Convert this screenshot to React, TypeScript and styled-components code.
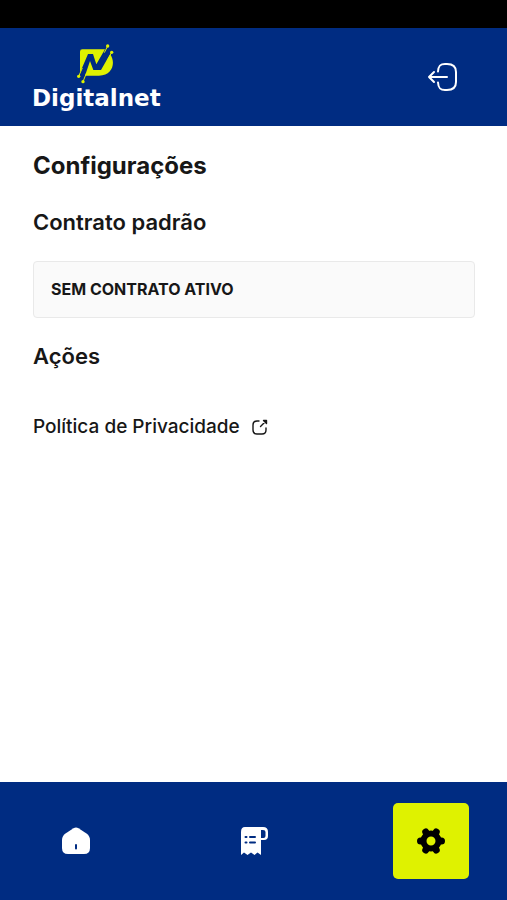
import React from "react";
import styled, { createGlobalStyle } from "styled-components";

const color = {
  brand: "#002c82",
  accent: "#dff200",
  text: "#171717",
  panel: "#fafafa",
  line: "#e9e9e9",
};

const GlobalStyle = createGlobalStyle`
  *, *::before, *::after { box-sizing: border-box; }
  body {
    margin: 0;
    background: #fff;
    color: ${color.text};
    font-family: Inter, "Liberation Sans", sans-serif;
  }
`;

const Screen = styled.div`
  display: flex;
  flex-direction: column;
  min-height: 100vh;
`;

const StatusBar = styled.div`
  height: 28px;
  background: #000;
`;

const Header = styled.header`
  display: flex;
  align-items: center;
  justify-content: space-between;
  padding: 14px 44px 14px 32px;
  background: ${color.brand};
`;

const Brand = styled.a`
  display: flex;
  flex-direction: column;
  align-items: center;
  padding-top: 2px;
  height: 70px;
  color: #fff;
  text-decoration: none;
`;

const Wordmark = styled.span`
  font-family: "DejaVu Sans", sans-serif;
  font-size: 23px;
  font-weight: 700;
  line-height: 28px;
`;

const IconButton = styled.button`
  display: flex;
  padding: 4px;
  border: 0;
  background: none;
  color: #fff;
  cursor: pointer;
`;

const Main = styled.main`
  display: flex;
  flex: 1;
  flex-direction: column;
  padding: 24px 32px 24px 33px;
`;

const PageTitle = styled.h1`
  margin: 0 0 24px;
  font-size: 24px;
  font-weight: 700;
  line-height: 32px;
`;

const SectionTitle = styled.h2`
  margin: 0 0 23px;
  font-size: 22px;
  font-weight: 600;
  line-height: 32px;
`;

const ContractCard = styled.div`
  margin-bottom: 22px;
  padding: 16px 17px;
  border: 1px solid ${color.line};
  border-radius: 4px;
  background: ${color.panel};
  font-size: 16px;
  font-weight: 700;
  line-height: 23px;
`;

const ActionLink = styled.a`
  display: flex;
  align-items: center;
  align-self: flex-start;
  gap: 12px;
  margin-top: 18px;
  color: ${color.text};
  font-size: 19px;
  font-weight: 500;
  line-height: 28px;
  text-decoration: none;
`;

const BottomNav = styled.nav`
  display: flex;
  justify-content: space-between;
  padding: 21px 38px;
  background: ${color.brand};
`;

const NavButton = styled.button<{ $active?: boolean }>`
  display: flex;
  align-items: center;
  justify-content: center;
  width: 76px;
  height: 76px;
  padding: 0;
  border: 0;
  border-radius: 5px;
  background: ${(p) => (p.$active ? color.accent : "transparent")};
  color: ${(p) => (p.$active ? "#000" : "#fff")};
  cursor: pointer;
`;

const LogoMark = () => (
  <svg width="38" height="40" viewBox="174 40 114 120" aria-hidden="true">
    <path
      fill={color.accent}
      d="M190 56H258L232 101 222 70H207L183 126V63Q183 56 190 56ZM273 71C290 91 284 135 240 135H198L213 91 223 118H246Z"
    />
    <path
      fill="none"
      stroke={color.accent}
      strokeWidth="3"
      d="M266 46 256 66M278 65 265 89M179 137 190 112M192 153 202 128"
    />
    <g fill={color.accent}>
      <circle cx="266" cy="46" r="5" />
      <circle cx="278" cy="65" r="5" />
      <circle cx="179" cy="137" r="5" />
      <circle cx="192" cy="153" r="5" />
    </g>
  </svg>
);

const ExitIcon = () => (
  <svg width="32" height="32" viewBox="0 0 32 32" fill="none" stroke="currentColor" strokeWidth="2" strokeLinecap="round" strokeLinejoin="round" aria-hidden="true">
    <path d="M11 10.5C11.3 5 13 3 18 3H20C26.500 3 29 5.500 29 11V21C29 26.500 26.500 29 20 29H18C13 29 11.300 27 11 21.500" />
    <path d="M20 16H2M7 11 2 16 7 21" />
  </svg>
);

const ExternalIcon = () => (
  <svg width="16" height="16" viewBox="0 0 16 16" fill="none" stroke="currentColor" strokeWidth="1.4" strokeLinecap="round" strokeLinejoin="round" aria-hidden="true">
    <path d="M7 2H5Q1 2 1 6V11Q1 15 5 15H10Q14 15 14 11V9" />
    <path d="M8.500 7.500 14 2M11.500 1.500H14.500V4.500Z" />
  </svg>
);

const HomeIcon = () => (
  <svg width="28" height="28" viewBox="0 0 28 28" aria-hidden="true">
    <path fill="currentColor" d="M11.500 1.200Q14 -.3 16.500 1.200L24.500 6.500Q28 9 28 13V21Q28 27 22 27H6Q0 27 0 21V13Q0 9 3.500 6.500Z" />
    <path stroke={color.brand} strokeWidth="2" strokeLinecap="round" d="M14 18V21.500" />
  </svg>
);

const ReceiptIcon = () => (
  <svg width="28" height="28" viewBox="0 0 28 28" aria-hidden="true">
    <path
      fill="currentColor"
      fillRule="evenodd"
      d="M5 0H23Q28 0 28 5V9Q28 13 24 13H21V28L17.500 25.500 14.500 28 11 25.500 7.500 28 4 25.500 1 28V5Q1 0 5 0ZM21 3V11H23.500Q25.500 11 25.500 9V5Q25.500 3 23 3Z"
    />
    <path stroke={color.brand} strokeWidth="2" strokeLinecap="round" d="M5.500 10H6.500M10 10H15M5.500 15.500H6.500M10 15.500H15" />
  </svg>
);

const GearIcon = () => (
  <svg width="28" height="28" viewBox="0 0 28 28" aria-hidden="true">
    <circle cx="14" cy="14" r="7.500" fill="none" stroke="currentColor" strokeWidth="6" />
    <path
      stroke="currentColor"
      strokeWidth="7"
      strokeLinecap="round"
      d="M3.500 14H5.500M24.500 14H22.500M8.750 4.910 9.750 6.640M19.250 23.090 18.250 21.360M19.250 4.910 18.250 6.640M8.750 23.090 9.750 21.360"
    />
  </svg>
);

export default function App() {
  return (
    <Screen>
      <GlobalStyle />
      <StatusBar />
      <Header>
        <Brand href="#">
          <LogoMark />
          <Wordmark>Digitalnet</Wordmark>
        </Brand>
        <IconButton type="button" aria-label="Sair">
          <ExitIcon />
        </IconButton>
      </Header>
      <Main>
        <PageTitle>Configurações</PageTitle>
        <SectionTitle>Contrato padrão</SectionTitle>
        <ContractCard>SEM CONTRATO ATIVO</ContractCard>
        <SectionTitle>Ações</SectionTitle>
        <ActionLink href="#">
          Política de Privacidade
          <ExternalIcon />
        </ActionLink>
      </Main>
      <BottomNav aria-label="Principal">
        <NavButton type="button" aria-label="Início">
          <HomeIcon />
        </NavButton>
        <NavButton type="button" aria-label="Faturas">
          <ReceiptIcon />
        </NavButton>
        <NavButton type="button" aria-label="Configurações" aria-current="page" $active>
          <GearIcon />
        </NavButton>
      </BottomNav>
    </Screen>
  );
}
